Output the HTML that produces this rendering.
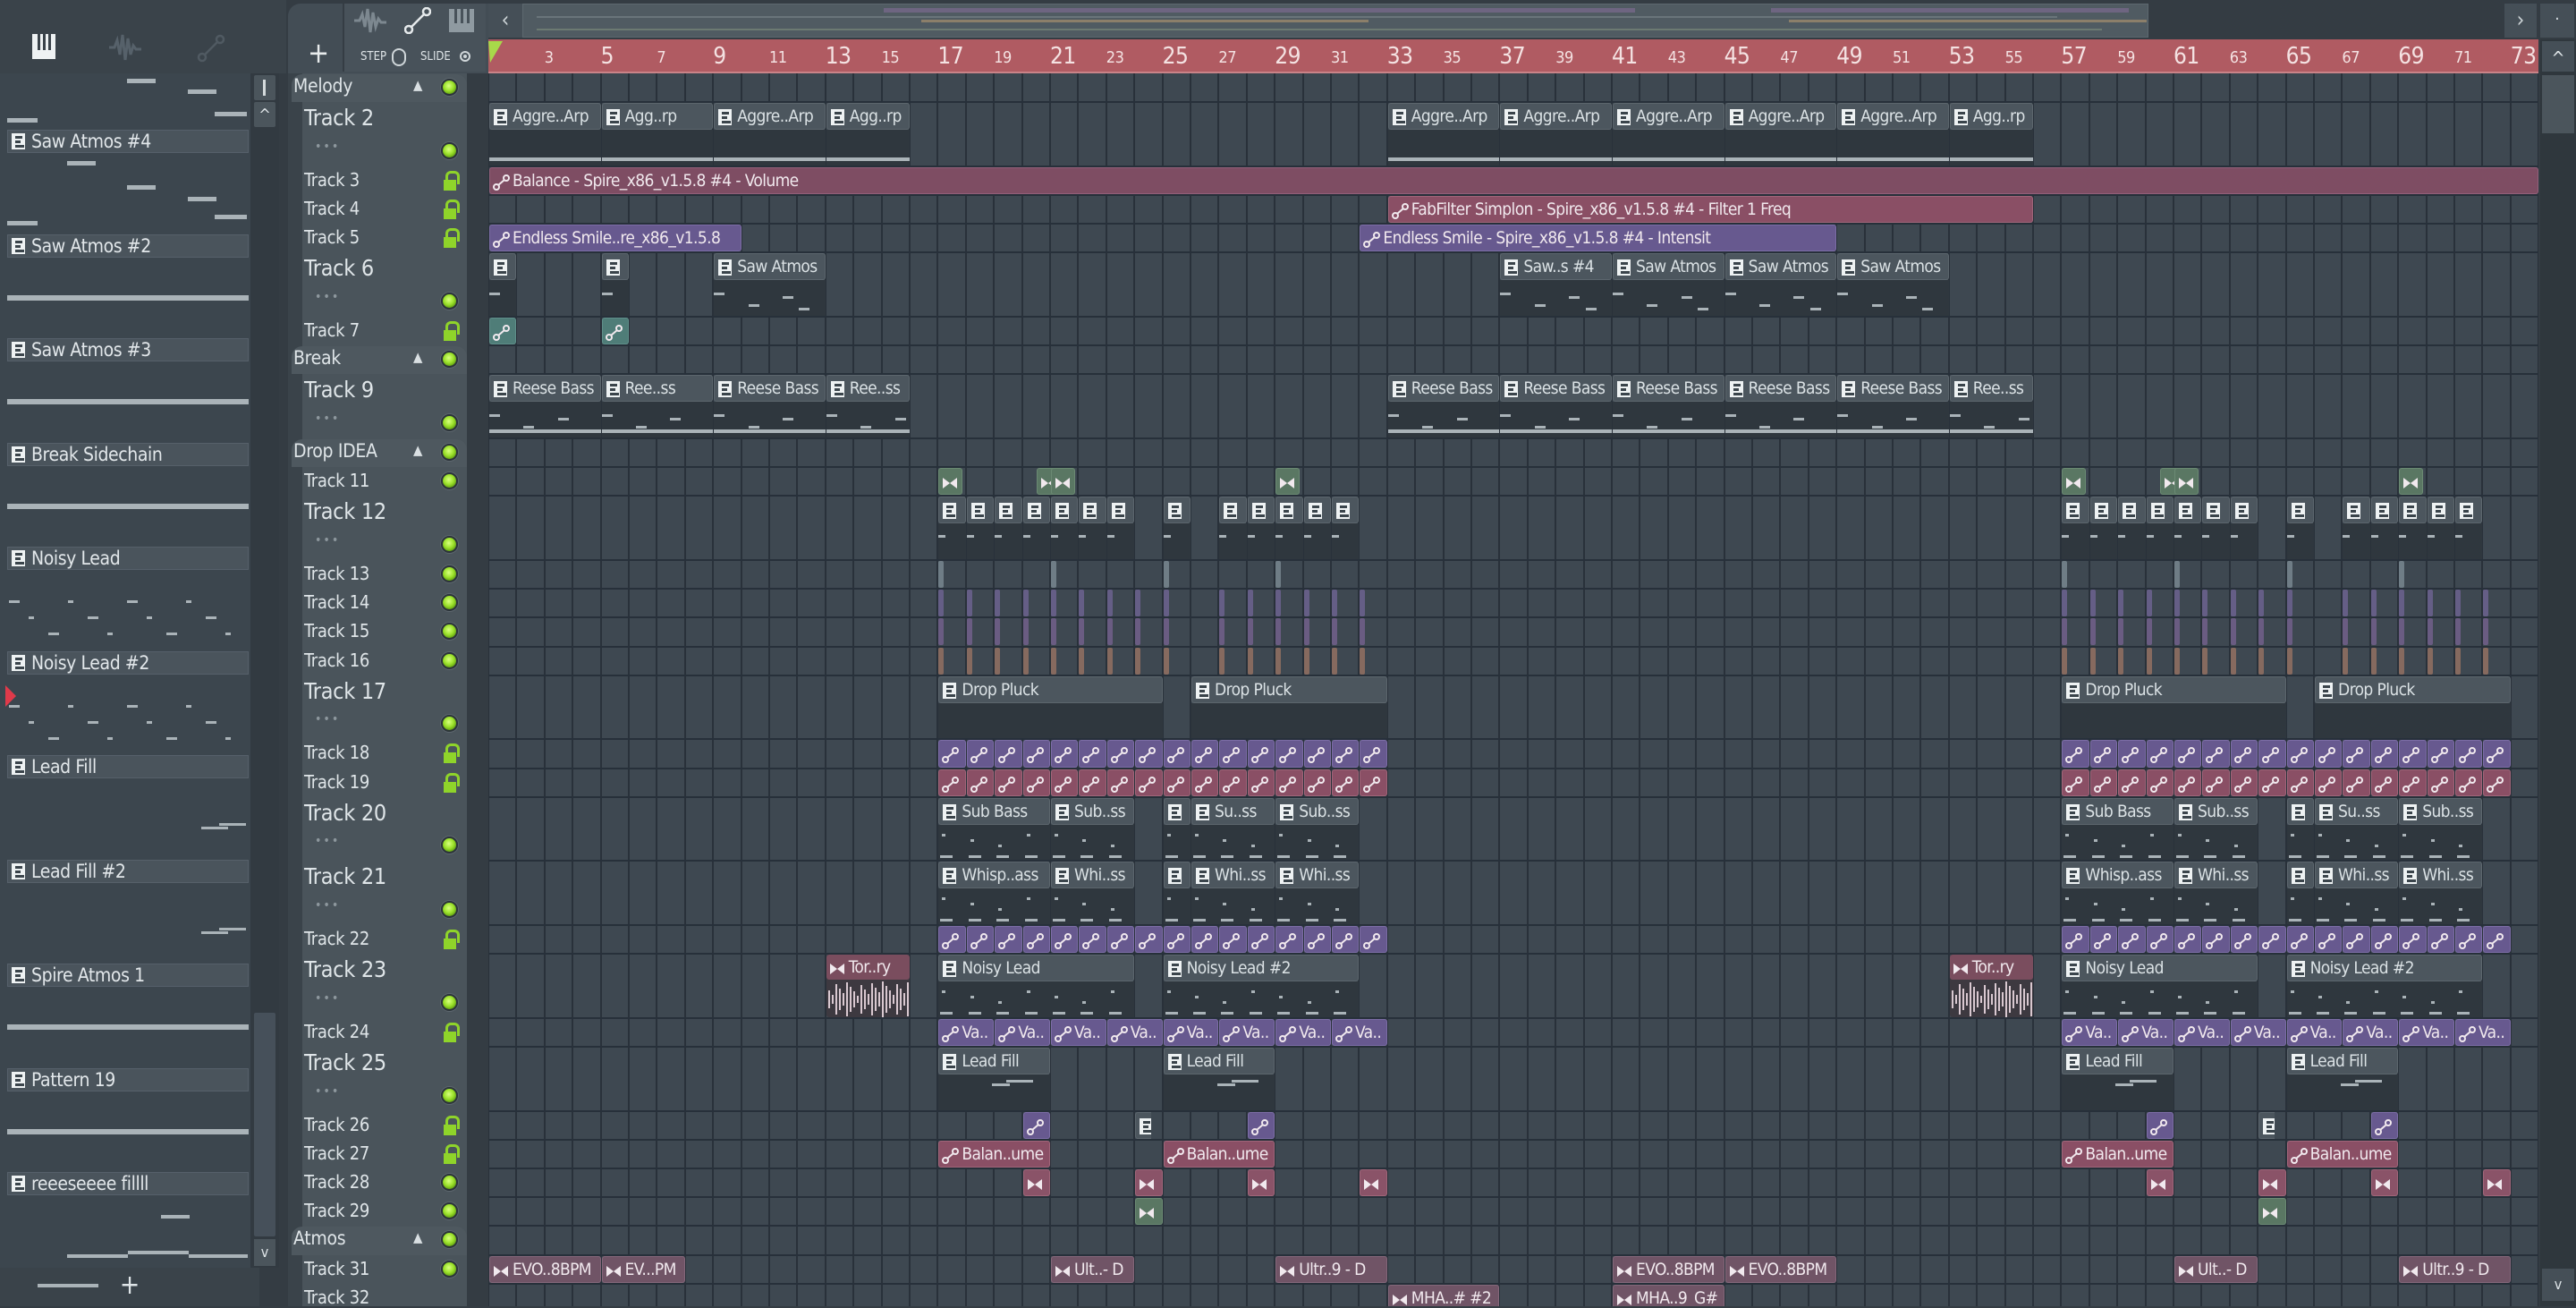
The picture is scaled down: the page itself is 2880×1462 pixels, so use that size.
<!DOCTYPE html>
<html><head><meta charset="utf-8">
<style>
*{box-sizing:border-box;margin:0;padding:0}
body{width:2880px;height:1460px;overflow:hidden;background:#343c43;font-family:"DejaVu Sans Condensed","DejaVu Sans","Liberation Sans",sans-serif;font-stretch:condensed;color:#dfe5e8;position:relative}
.a{position:absolute}
#grid{position:absolute;left:546px;top:82px;width:2292px;height:1378px;background:#3e4851;overflow:hidden}
.vl{position:absolute;top:0;width:2px;height:1378px;background:#29313a}
.hl{position:absolute;left:0;width:2292px;height:2px;background:#27303a}
.clip{position:absolute;overflow:hidden;white-space:nowrap;letter-spacing:-0.6px}
.ph{position:absolute;left:0;right:0;top:0;height:30px;background:#4c565e;border:1px solid #5c666d;border-radius:3px;font-size:19px;line-height:28px;padding-left:25px;color:#dbe2e5}
.pb{position:absolute;left:0;right:0;top:30px;bottom:0;background:#2f373e}
.pi{position:absolute;left:4px;top:6px;width:15px;height:18px;background:#eef2f3}
.pi i{position:absolute;left:4px;height:3px;background:#3a444b}
.au{border-radius:3px;font-size:19px;line-height:30px;padding-left:25px;color:#f1e9ee}
.ic{position:absolute;left:3px;top:7px}
.th{position:absolute;left:340px;font-size:20px;color:#dfe5e8;letter-spacing:-0.3px}
.led{position:absolute;width:19px;height:19px;border-radius:50%;background:radial-gradient(circle at 45% 40%,#d8ff80 0,#9be12a 45%,#5c9a10 80%);border:2px solid #2c343a;box-shadow:0 0 0 1px #5d676e}
.lock{position:absolute;width:14px;height:22px}
.lock:before{content:"";position:absolute;left:2px;top:0;width:10px;height:12px;border:3px solid #8fd42a;border-bottom:none;border-radius:6px 6px 0 0}
.lock:after{content:"";position:absolute;left:0;top:10px;width:14px;height:12px;background:#8fd42a}
.lp{position:absolute;left:8px;width:270px;height:26px;background:#4a545c;border:1px solid #56606a;font-size:21px;line-height:24px;padding-left:26px;color:#e2e7ea;letter-spacing:-0.4px}
.nb{position:absolute;height:5px;background:#aab3b8}
</style></head><body>

<div class="a" style="left:0;top:0;width:320px;height:82px;background:#3a434a"></div>
<svg class="a" style="left:36px;top:38px" width="26" height="28"><rect x="0" y="0" width="26" height="28" fill="#eef2f3"/><rect x="6" y="0" width="3" height="18" fill="#3a434a"/><rect x="12" y="0" width="3" height="18" fill="#3a434a"/><rect x="18" y="0" width="3" height="18" fill="#3a434a"/></svg>
<svg class="a" style="left:120px;top:36px" width="40" height="34"><path d="M2 17h6l3-8 3 16 3-22 3 28 3-24 3 18 3-10 3 4h6" stroke="#56616a" stroke-width="3" fill="none"/></svg>
<svg class="a" style="left:220px;top:38px" width="32" height="32"><circle cx="6" cy="26" r="4" stroke="#505a62" stroke-width="2.5" fill="none"/><circle cx="26" cy="6" r="4" stroke="#505a62" stroke-width="2.5" fill="none"/><path d="M9 23L23 9" stroke="#505a62" stroke-width="2.5"/></svg>
<div class="a" style="left:0;top:82px;width:280px;height:1335px;background:#3c464e"></div>
<div class="a" style="left:280px;top:82px;width:32px;height:1335px;background:#323a41"></div>
<div class="a" style="left:284px;top:84px;width:24px;height:28px;background:#4b555c;border-radius:2px"><div class="a" style="left:10px;top:5px;width:3px;height:18px;background:#d4dadc"></div></div>
<div class="a" style="left:284px;top:114px;width:24px;height:28px;background:#4b555c;border-radius:2px;font-size:18px;text-align:center;line-height:30px">^</div>
<div class="a" style="left:284px;top:1132px;width:24px;height:250px;background:#46505a;border-radius:2px"></div>
<div class="a" style="left:284px;top:1385px;width:24px;height:30px;background:#4b555c;font-size:16px;text-align:center;line-height:30px">v</div>
<div class="a" style="left:0;top:1417px;height:43px;background:#3a434a;font-size:30px;text-align:center;line-height:40px;color:#dfe5e8;width:290px">+</div>
<div id="lp"></div>

<div class="a" style="left:322px;top:4px;width:224px;height:78px;background:#434d55;border-radius:14px 0 0 0"></div>
<div class="a" style="left:383px;top:4px;width:160px;height:76px;background:#48525a;border-left:2px solid #353d44"></div>
<div class="a" style="left:344px;top:40px;font-size:32px;color:#e8eced">+</div>
<svg class="a" style="left:394px;top:8px" width="40" height="30"><path d="M2 15h6l3-7 3 14 3-20 3 26 3-22 3 16 3-9 3 4h6" stroke="#7d8890" stroke-width="3" fill="none"/></svg>
<svg class="a" style="left:452px;top:8px" width="30" height="30"><circle cx="5" cy="25" r="4" stroke="#e6eaec" stroke-width="2.5" fill="none"/><circle cx="25" cy="5" r="4" stroke="#e6eaec" stroke-width="2.5" fill="none"/><path d="M8 22L22 8" stroke="#e6eaec" stroke-width="2.5"/></svg>
<svg class="a" style="left:502px;top:10px" width="28" height="26"><rect width="28" height="26" fill="#8f9aa1"/><rect x="6" y="0" width="3" height="16" fill="#48525a"/><rect x="13" y="0" width="3" height="16" fill="#48525a"/><rect x="20" y="0" width="3" height="16" fill="#48525a"/></svg>
<div class="a" style="left:403px;top:56px;font-size:13px;color:#dfe5e8">STEP</div>
<div class="a" style="left:438px;top:54px;width:16px;height:20px;border:2px solid #cfd6d9;border-radius:8px"></div>
<div class="a" style="left:470px;top:56px;font-size:13px;color:#dfe5e8">SLIDE</div>
<div class="a" style="left:514px;top:57px;width:12px;height:12px;border:2px solid #cfd6d9;border-radius:50%"><div class="a" style="left:2px;top:2px;width:4px;height:4px;background:#cfd6d9;border-radius:50%"></div></div>

<div class="a" style="left:546px;top:4px;width:38px;height:38px;background:#454f57;font-size:24px;text-align:center;line-height:36px;color:#cfd6d9">‹</div>
<div class="a" style="left:584px;top:4px;width:1818px;height:38px;background:#505b62;border:1px solid #5d686f"></div>
<div class="a" style="left:988px;top:9px;width:840px;height:5px;background:#7a6a8e;opacity:.7"></div>
<div class="a" style="left:1980px;top:9px;width:400px;height:5px;background:#7a6a8e;opacity:.7"></div>
<div class="a" style="left:600px;top:18px;width:1700px;height:2px;background:#6a747a"></div>
<div class="a" style="left:1030px;top:22px;width:500px;height:3px;background:#8c7f6a"></div>
<div class="a" style="left:2000px;top:22px;width:400px;height:3px;background:#8c7f6a"></div>
<div class="a" style="left:600px;top:32px;width:1750px;height:2px;background:#6c7a72"></div>
<div class="a" style="left:2800px;top:4px;width:36px;height:38px;background:#454f57;font-size:24px;text-align:center;line-height:36px;color:#cfd6d9">›</div>
<div class="a" style="left:2840px;top:4px;width:38px;height:38px;background:#454f57;font-size:18px;text-align:center;line-height:36px">·</div>

<div class="a" style="left:546px;top:44px;width:2292px;height:38px;background:#b05b62;border-bottom:2px solid #c98388"></div>
<svg class="a" style="left:546px;top:46px" width="18" height="26"><path d="M0 0h16L2 24z" fill="#a8d94a"/></svg>
<div id="ruler"></div>

<div class="a" style="left:2840px;top:44px;width:40px;height:1416px;background:#2f373d"></div>
<div class="a" style="left:2842px;top:46px;width:36px;height:34px;background:#454f57;font-size:20px;text-align:center;line-height:38px">^</div>
<div class="a" style="left:2842px;top:84px;width:36px;height:65px;background:#4b555c"></div>
<div class="a" style="left:2842px;top:1418px;width:36px;height:36px;background:#454f57;font-size:16px;text-align:center;line-height:36px">v</div>

<div class="a" style="left:322px;top:82px;width:224px;height:1378px;background:#343c43"></div>
<div class="a" style="left:322px;top:82px;width:200px;height:1378px;background:#4a545b"></div>
<div class="a" style="left:322px;top:82px;width:16px;height:1378px;background:#3a434a"></div>
<div id="th"></div>
<div id="grid"></div>

<script>
const S=32.2,T=71.6;
const rows=[
["Melody","g","led"],["Track 2","T","led"],["Track 3","s","lock"],["Track 4","s","lock"],["Track 5","s","lock"],["Track 6","T","led"],["Track 7","s","lock"],
["Break","g","led"],["Track 9","T","led"],["Drop IDEA","g","led"],["Track 11","s","led"],["Track 12","T","led"],["Track 13","s","led"],["Track 14","s","led"],["Track 15","s","led"],["Track 16","s","led"],["Track 17","T","led"],["Track 18","s","lock"],["Track 19","s","lock"],["Track 20","T","led"],["Track 21","T","led"],["Track 22","s","lock"],["Track 23","T","led"],["Track 24","s","lock"],["Track 25","T","led"],["Track 26","s","lock"],["Track 27","s","lock"],["Track 28","s","led"],["Track 29","s","led"],
["Atmos","g","led"],["Track 31","s","led"],["Track 32","s",""]];
const RY={},RH={};
let y=82,h='';
const grid=document.getElementById('grid');
let g='';
for(let b=1;b<=74;b++){g+=`<div class="vl" style="left:${(b-1)*31.4-1}px"></div>`;}
rows.forEach(r=>{
 const hh=r[1]=="T"?T:S; RY[r[0]]=y-82; RH[r[0]]=hh;
 g+=`<div class="hl" style="top:${y-82+hh-1}px"></div>`;
 if(r[1]=="g"){
  h+=`<div class="a" style="left:326px;top:${y+1}px;width:196px;height:${hh-1}px;background:#4e585f;border-radius:12px 12px 0 0"></div>`;
  h+=`<div class="a" style="left:328px;top:${y+2}px;font-size:21px;letter-spacing:-0.3px">${r[0]}</div>`;
  h+=`<div class="a" style="left:462px;top:${y+4}px;font-size:15px;color:#d9dfe2">▲</div>`;
 } else {
  const fs=r[1]=="T"?25:20;
  h+=`<div class="th" style="top:${y+3}px;font-size:${fs}px">${r[0]}</div>`;
  if(r[1]=="T")h+=`<div class="a" style="left:352px;top:${y+hh-30}px;font-size:14px;color:#8d979d;letter-spacing:2px">•••</div>`;
 }
 const iy=r[1]=="T"?y+hh-27:y+6;
 if(r[2]=="led")h+=`<div class="led" style="left:493px;top:${iy}px"></div>`;
 if(r[2]=="lock")h+=`<div class="lock" style="left:496px;top:${iy-1}px"></div>`;
 y+=hh;
});
document.getElementById('th').innerHTML=h;

const X=b=>(b-1)*31.4;
const PI='<div class="pi"><i style="top:3px;width:8px"></i><i style="top:8px;width:6px"></i><i style="top:13px;width:10px"></i></div>';
const AI=c=>`<svg class="ic" width="20" height="18"><circle cx="4" cy="14" r="3" stroke="${c}" stroke-width="2" fill="none"/><circle cx="15" cy="4" r="3" stroke="${c}" stroke-width="2" fill="none"/><path d="M6 12L13 6" stroke="${c}" stroke-width="2"/></svg>`;
const WI='<svg class="ic" width="18" height="18"><path d="M1 3l8 6-8 6zM9 9l8-6v12z" fill="#f1e9ee"/></svg>';
function pat(t,b1,b2,l,notes){
 const top=RY[t]+1,hh=RH[t]-2;
 let s=`<div class="clip" style="left:${X(b1)+1}px;top:${top}px;width:${X(b2)-X(b1)-1}px;height:${hh}px">`;
 if(hh>40)s+=`<div class="pb"></div>`;
 s+=`<div class="ph" style="${hh<40?'height:'+hh+'px':''}">${PI}${l||''}</div>`;
 if(hh>40&&notes)s+=notes(X(b2)-X(b1));
 return s+'</div>';
}
const lineN=w=>`<div class="nb" style="left:0;width:${w}px;top:61px;height:4px"></div>`;
const dashN=w=>{let s='';for(let i=0;i*31.4<w-6;i++)s+=`<div class="nb" style="left:${i*31.4+((i*7)%20)}px;width:12px;top:${44+((i*13)%22)}px;height:3px"></div>`;return s;};
const smallN=w=>{let s='';for(let i=0;i*31.4<w-6;i++)s+=`<div class="nb" style="left:${i*31.4+4}px;width:4px;top:${40+(i%3)*6}px;height:3px"></div><div class="nb" style="left:${i*31.4+2}px;width:14px;top:64px;height:3px"></div>`;return s;};
function au(t,b1,b2,l,bg,bd,icon){
 const top=RY[t]+1,hh=RH[t]-2;
 return `<div class="clip au" style="left:${X(b1)+1}px;top:${top}px;width:${X(b2)-X(b1)-1}px;height:${hh}px;background:${bg};border:1px solid ${bd};line-height:${hh-2}px">${icon||AI('#f1e9ee')}${l||''}</div>`;
}
function wav(t,b1,b2,l){
 const top=RY[t]+1,hh=RH[t]-2,w=X(b2)-X(b1)-1;
 let s=`<div class="clip" style="left:${X(b1)+1}px;top:${top}px;width:${w}px;height:${hh}px;background:#3d3940;border-radius:3px">`;
 s+=`<div class="au" style="position:absolute;left:0;right:0;top:0;height:28px;background:#7a4d5e;line-height:28px">${WI}${l}</div>`;
 for(let i=2;i<w;i+=4){const a=4+((i*37)%17);s+=`<div class="a" style="left:${i}px;top:${50-a}px;width:2px;height:${a*2}px;background:#d9c8d0"></div>`;}
 return s+'</div>';
}
const PK='#8a4f65',PKB='#a06579',PU='#67598f',PUB='#7c6da6';
let c='';
[[1,5,'Aggre..Arp'],[5,9,'Agg..rp'],[9,13,'Aggre..Arp'],[13,16,'Agg..rp'],[33,37,'Aggre..Arp'],[37,41,'Aggre..Arp'],[41,45,'Aggre..Arp'],[45,49,'Aggre..Arp'],[49,53,'Aggre..Arp'],[53,56,'Agg..rp']].forEach(a=>c+=pat('Track 2',a[0],a[1],a[2],lineN));
c+=au('Track 3',1,74,'Balance - Spire_x86_v1.5.8 #4 - Volume','#7e4d63','#92607a');
c+=au('Track 4',33,56,'FabFilter Simplon - Spire_x86_v1.5.8 #4 - Filter 1 Freq',PK,PKB);
c+=au('Track 5',1,10,'Endless Smile..re_x86_v1.5.8',PU,PUB);
c+=au('Track 5',32,49,'Endless Smile - Spire_x86_v1.5.8 #4 - Intensit',PU,PUB);
[[1,2,''],[5,6,''],[9,13,'Saw Atmos'],[37,41,'Saw..s #4'],[41,45,'Saw Atmos'],[45,49,'Saw Atmos'],[49,53,'Saw Atmos']].forEach(a=>c+=pat('Track 6',a[0],a[1],a[2],dashN));
c+=au('Track 7',1,2,'','#4f7d78','#5f8f8a');c+=au('Track 7',5,6,'','#4f7d78','#5f8f8a');
[[1,5,'Reese Bass'],[5,9,'Ree..ss'],[9,13,'Reese Bass'],[13,16,'Ree..ss'],[33,37,'Reese Bass'],[37,41,'Reese Bass'],[41,45,'Reese Bass'],[45,49,'Reese Bass'],[49,53,'Reese Bass'],[53,56,'Ree..ss']].forEach(a=>c+=pat('Track 9',a[0],a[1],a[2],w=>lineN(w)+dashN(w)));
const GA='#5a7763',GAB='#6b8a73';
[[17,17.5],[20.5,21],[21,21.5],[29,29.5],[57,57.5],[60.5,61],[61,61.5],[69,69.5]].forEach(a=>c+=au('Track 11',a[0],a[1],'',GA,GAB,WI));
[0,40].forEach(o=>{
 [17,18,19,20,21,22,23,25,27,28,29,30,31].forEach(b=>c+=pat('Track 12',b+o,b+o+1,'',w=>`<div class="nb" style="left:0;width:8px;top:43px;height:3px"></div>`));
 [17,21,25,29].forEach(b=>c+=`<div class="clip" style="left:${X(b+o)+1}px;top:${RY['Track 13']+1}px;width:6px;height:30px;background:#6f7d86;border-radius:2px"></div>`);
 [17,18,19,20,21,22,23,24,25,27,28,29,30,31,32].forEach(b=>{
  c+=`<div class="clip" style="left:${X(b+o)+1}px;top:${RY['Track 14']+1}px;width:6px;height:30px;background:#655e86;border-radius:2px"></div>`;
  c+=`<div class="clip" style="left:${X(b+o)+1}px;top:${RY['Track 15']+1}px;width:6px;height:30px;background:#6a5c82;border-radius:2px"></div>`;
  c+=`<div class="clip" style="left:${X(b+o)+1}px;top:${RY['Track 16']+1}px;width:6px;height:30px;background:#866a5f;border-radius:2px"></div>`;
 });
 c+=pat('Track 17',17+o,25+o,'Drop Pluck',()=>'');c+=pat('Track 17',26+o,33+o,'Drop Pluck',()=>'');
 for(let b=17;b<33;b++){c+=au('Track 18',b+o,b+o+1,'',PU,PUB);c+=au('Track 19',b+o,b+o+1,'',PK,PKB);c+=au('Track 22',b+o,b+o+1,'',PU,PUB);}
 [[17,21,'Sub Bass'],[21,24,'Sub..ss'],[25,26,''],[26,29,'Su..ss'],[29,32,'Sub..ss']].forEach(a=>c+=pat('Track 20',a[0]+o,a[1]+o,a[2],smallN));
 [[17,21,'Whisp..ass'],[21,24,'Whi..ss'],[25,26,''],[26,29,'Whi..ss'],[29,32,'Whi..ss']].forEach(a=>c+=pat('Track 21',a[0]+o,a[1]+o,a[2],smallN));
 c+=pat('Track 23',17+o,24+o,'Noisy Lead',smallN);c+=pat('Track 23',25+o,32+o,'Noisy Lead #2',smallN);
 for(let b=17;b<33;b+=2)c+=au('Track 24',b+o,b+o+2,'Va..',PU,PUB);
 const lf=w=>`<div class="nb" style="left:60px;width:20px;top:40px;height:3px"></div><div class="nb" style="left:76px;width:30px;top:36px;height:3px"></div>`;
 c+=pat('Track 25',17+o,21+o,'Lead Fill',lf);
 c+=pat('Track 25',25+o,29+o,'Lead Fill',lf);
 c+=au('Track 26',20+o,21+o,'',PU,PUB);c+=pat('Track 26',24+o,24.6+o,'');c+=au('Track 26',28+o,29+o,'',PU,PUB);
 c+=au('Track 27',17+o,21+o,'Balan..ume',PK,PKB);c+=au('Track 27',25+o,29+o,'Balan..ume',PK,PKB);
 [20,24,28,32].forEach(b=>c+=au('Track 28',b+o,b+o+1,'','#8a5368','#a06579',WI));
 c+=au('Track 29',24+o,25+o,'',GA,GAB,WI);
});
const AP='#705466',APB='#84677a';
c+=wav('Track 23',13,16,'Tor..ry');c+=wav('Track 23',53,56,'Tor..ry');
[[1,5,'EVO..8BPM'],[5,8,'EV...PM'],[21,24,'Ult..- D'],[29,33,'Ultr..9 - D'],[41,45,'EVO..8BPM'],[45,49,'EVO..8BPM'],[61,64,'Ult..- D'],[69,73,'Ultr..9 - D']].forEach(a=>c+=au('Track 31',a[0],a[1],a[2],AP,APB,WI));
c+=au('Track 32',33,37,'MHA..# #2',AP,APB,WI);c+=au('Track 32',41,45,'MHA..9_G#',AP,APB,WI);
grid.innerHTML=g+c;

let r='';
for(let b=1;b<=73;b+=2){const big=(b-1)%4==0;r+=`<div class="a" style="left:${546+X(b)+(b==1?2:0)}px;top:${big?48:54}px;font-size:${big?26:18}px;color:#f4e2e2;letter-spacing:-0.5px">${b==1?'':b}</div>`;}
document.getElementById('ruler').innerHTML=r;

const names=['Saw Atmos #4','Saw Atmos #2','Saw Atmos #3','Break Sidechain','Noisy Lead','Noisy Lead #2','Lead Fill','Lead Fill #2','Spire Atmos 1','Pattern 19','reeeseeee fillll'];
let l='';
l+=`<div class="nb" style="left:142px;top:88px;width:32px"></div><div class="nb" style="left:210px;top:100px;width:32px"></div><div class="nb" style="left:240px;top:125px;width:36px"></div><div class="nb" style="left:8px;top:132px;width:34px"></div>`;
names.forEach((n,i)=>{
 const t=145+i*116.5;
 l+=`<div class="lp" style="top:${t}px"><div class="pi" style="top:3px;left:4px"><i style="top:3px;width:8px"></i><i style="top:8px;width:6px"></i><i style="top:13px;width:10px"></i></div>${n}</div>`;
 const p=t+30;
 if(n=='Saw Atmos #4'){l+=`<div class="nb" style="left:75px;top:${p+5}px;width:32px"></div><div class="nb" style="left:142px;top:${p+32}px;width:32px"></div><div class="nb" style="left:210px;top:${p+45}px;width:32px"></div><div class="nb" style="left:240px;top:${p+65}px;width:36px"></div><div class="nb" style="left:8px;top:${p+72}px;width:34px"></div>`;}
 else if(n.startsWith('Saw Atmos')||n=='Spire Atmos 1'||n=='Pattern 19'||n=='Break Sidechain'){l+=`<div class="nb" style="left:8px;top:${p+38}px;width:270px;height:6px"></div>`;}
 else if(n.startsWith('Noisy')){for(let k=0;k<12;k++)l+=`<div class="nb" style="left:${10+k*22}px;top:${p+30+(k%3)*18}px;width:${k%2?6:12}px;height:3px"></div>`;}
 else if(n.startsWith('Lead Fill')){l+=`<div class="nb" style="left:225px;top:${p+50}px;width:30px;height:3px"></div><div class="nb" style="left:245px;top:${p+46}px;width:30px;height:3px"></div>`;}
 else {l+=`<div class="nb" style="left:180px;top:${p+18}px;width:32px;height:4px"></div><div class="nb" style="left:75px;top:${p+62}px;width:68px;height:4px"></div><div class="nb" style="left:143px;top:${p+58}px;width:68px;height:4px"></div><div class="nb" style="left:211px;top:${p+62}px;width:66px;height:4px"></div><div class="nb" style="left:42px;top:${p+95}px;width:68px;height:4px"></div>`;}
});
l+=`<svg class="a" style="left:6px;top:766px" width="14" height="24"><path d="M0 0l12 12L0 24z" fill="#e03a4a"/></svg>`;
document.getElementById('lp').innerHTML=l;
</script>
</body></html>
